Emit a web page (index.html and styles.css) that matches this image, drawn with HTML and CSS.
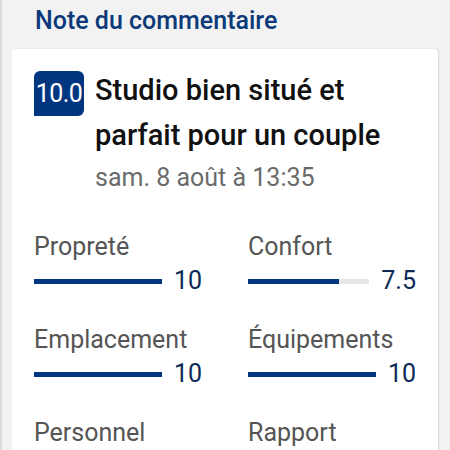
FILE: index.html
```html
<!DOCTYPE html>
<html lang="fr">
<head>
    <meta charset="UTF-8">
    <meta name="viewport" content="width=device-width, initial-scale=1.0">
    <title>Note du commentaire</title>
    <link rel="stylesheet" href="styles.css">
</head>
<body>
    <!-- Review score section -->
    <h1 class="section-title">Note du commentaire</h1>

    <div class="review-card">
        <div class="review-head">
            <span class="score-badge">10.0</span>
            <div class="review-info">
                <h2 class="review-title">Studio bien situé et parfait pour un couple</h2>
                <p class="review-date">sam. 8 août à 13:35</p>
            </div>
        </div>

        <!-- Category scores -->
        <div class="score-grid">
            <div class="score-item">
                <div class="score-label">Propreté</div>
                <div class="score-row">
                    <div class="bar"><div class="bar-fill" style="width: 100%"></div></div>
                    <span class="score-value">10</span>
                </div>
            </div>
            <div class="score-item">
                <div class="score-label">Confort</div>
                <div class="score-row">
                    <div class="bar"><div class="bar-fill" style="width: 75%"></div></div>
                    <span class="score-value">7.5</span>
                </div>
            </div>
            <div class="score-item">
                <div class="score-label">Emplacement</div>
                <div class="score-row">
                    <div class="bar"><div class="bar-fill" style="width: 100%"></div></div>
                    <span class="score-value">10</span>
                </div>
            </div>
            <div class="score-item">
                <div class="score-label">Équipements</div>
                <div class="score-row">
                    <div class="bar"><div class="bar-fill" style="width: 100%"></div></div>
                    <span class="score-value">10</span>
                </div>
            </div>
            <div class="score-item">
                <div class="score-label">Personnel</div>
                <div class="score-row">
                    <div class="bar"><div class="bar-fill" style="width: 100%"></div></div>
                    <span class="score-value">10</span>
                </div>
            </div>
            <div class="score-item">
                <div class="score-label">Rapport</div>
                <div class="score-row">
                    <div class="bar"><div class="bar-fill" style="width: 100%"></div></div>
                    <span class="score-value">10</span>
                </div>
            </div>
        </div>
    </div>
</body>
</html>
```

FILE: styles.css
```css
/* Page */
body {
    font-family: Roboto, "Liberation Sans", sans-serif;
    background: #f2f2f2;
    margin: 0;
    padding: 0 12px 0 10px;
    border-left: 2px solid #dcdcdc;
    height: 450px;
    overflow: hidden;
}

.section-title {
    font-size: 25px;
    font-weight: 500;
    color: #0c3a78;
    margin: 0;
    padding: 7px 0 0 23px;
    height: 49px;
    box-sizing: border-box;
    line-height: 28px;
}

/* Review card */
.review-card {
    background: #ffffff;
    border-radius: 4px;
    box-shadow: 1px 0 2px rgba(0, 0, 0, 0.12);
    padding: 22px 22px 0 22px;
    height: 420px;
}

.review-head {
    display: flex;
    align-items: flex-start;
    gap: 11px;
}

.score-badge {
    background: #003580;
    color: #ffffff;
    font-size: 25px;
    width: 50px;
    height: 45px;
    line-height: 45px;
    text-align: center;
    border-radius: 6px 6px 6px 0;
    flex-shrink: 0;
    letter-spacing: -0.5px;
}

.review-title {
    font-size: 29px;
    font-weight: 500;
    color: #111111;
    margin: -3px 0 0 0;
    line-height: 45px;
}

.review-date {
    font-size: 25px;
    color: #6b6b6b;
    margin: 5px 0 0 0;
    line-height: 30px;
}

/* Scores */
.score-grid {
    display: grid;
    grid-template-columns: 168px 168px;
    column-gap: 46px;
    row-gap: 29px;
    margin-top: 39px;
}

.score-label {
    font-size: 25px;
    color: #555555;
    line-height: 30px;
}

.score-row {
    display: flex;
    align-items: center;
    gap: 12px;
    margin-top: 4px;
}

.bar {
    flex: 1;
    height: 5px;
    background: #e6e6e6;
}

.bar-fill {
    height: 100%;
    background: #003580;
}

.score-value {
    font-size: 25px;
    color: #0c2a55;
    line-height: 30px;
}
```
